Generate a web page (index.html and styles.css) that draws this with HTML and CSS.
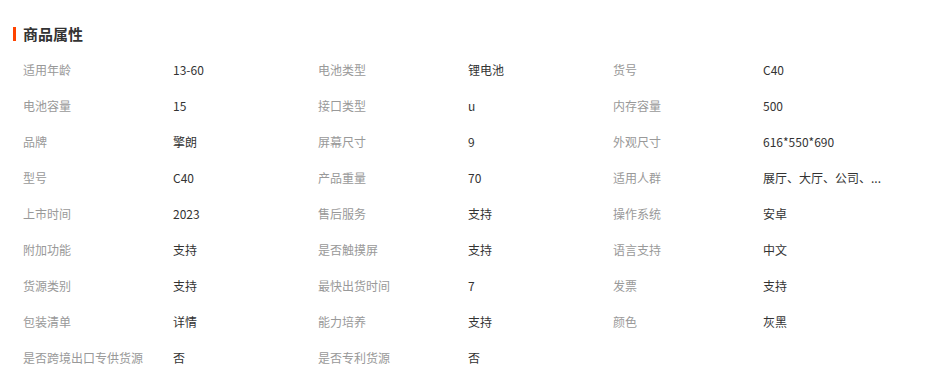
FILE: index.html
```html
<!DOCTYPE html>
<html lang="zh-CN">
<head>
<meta charset="utf-8">
<title>商品属性</title>
<link rel="stylesheet" href="styles.css">
</head>
<body>
<section class="attrs">
  <h2 class="attrs-title">商品属性</h2>
  <ul class="attrs-list">
    <li class="attr"><span class="attr-key">适用年龄</span><span class="attr-val">13-60</span></li>
    <li class="attr"><span class="attr-key">电池类型</span><span class="attr-val">锂电池</span></li>
    <li class="attr"><span class="attr-key">货号</span><span class="attr-val">C40</span></li>
    <li class="attr"><span class="attr-key">电池容量</span><span class="attr-val">15</span></li>
    <li class="attr"><span class="attr-key">接口类型</span><span class="attr-val">u</span></li>
    <li class="attr"><span class="attr-key">内存容量</span><span class="attr-val">500</span></li>
    <li class="attr"><span class="attr-key">品牌</span><span class="attr-val">擎朗</span></li>
    <li class="attr"><span class="attr-key">屏幕尺寸</span><span class="attr-val">9</span></li>
    <li class="attr"><span class="attr-key">外观尺寸</span><span class="attr-val">616*550*690</span></li>
    <li class="attr"><span class="attr-key">型号</span><span class="attr-val">C40</span></li>
    <li class="attr"><span class="attr-key">产品重量</span><span class="attr-val">70</span></li>
    <li class="attr"><span class="attr-key">适用人群</span><span class="attr-val">展厅、大厅、公司、...</span></li>
    <li class="attr"><span class="attr-key">上市时间</span><span class="attr-val">2023</span></li>
    <li class="attr"><span class="attr-key">售后服务</span><span class="attr-val">支持</span></li>
    <li class="attr"><span class="attr-key">操作系统</span><span class="attr-val">安卓</span></li>
    <li class="attr"><span class="attr-key">附加功能</span><span class="attr-val">支持</span></li>
    <li class="attr"><span class="attr-key">是否触摸屏</span><span class="attr-val">支持</span></li>
    <li class="attr"><span class="attr-key">语言支持</span><span class="attr-val">中文</span></li>
    <li class="attr"><span class="attr-key">货源类别</span><span class="attr-val">支持</span></li>
    <li class="attr"><span class="attr-key">最快出货时间</span><span class="attr-val">7</span></li>
    <li class="attr"><span class="attr-key">发票</span><span class="attr-val">支持</span></li>
    <li class="attr"><span class="attr-key">包装清单</span><span class="attr-val">详情</span></li>
    <li class="attr"><span class="attr-key">能力培养</span><span class="attr-val">支持</span></li>
    <li class="attr"><span class="attr-key">颜色</span><span class="attr-val">灰黑</span></li>
    <li class="attr"><span class="attr-key">是否跨境出口专供货源</span><span class="attr-val">否</span></li>
    <li class="attr"><span class="attr-key">是否专利货源</span><span class="attr-val">否</span></li>
  </ul>
</section>
</body>
</html>
```

FILE: styles.css
```css
html, body {
  margin: 0;
  padding: 0;
  background: #fff;
}

body {
  font-family: "Noto Sans CJK SC", "Microsoft YaHei", sans-serif;
  color: #333;
}

.attrs {
  padding: 23px 0 0 13px;
}

.attrs-title {
  margin: 0;
  display: flex;
  align-items: center;
  gap: 7px;
  font-size: 15px;
  font-weight: bold;
  line-height: 22px;
  color: #333;
}

.attrs-title::before {
  content: "";
  display: block;
  width: 3px;
  height: 14px;
  background: #ff4400;
}

.attrs-list {
  list-style: none;
  margin: 6px 0 0 10px;
  padding: 0;
  display: grid;
  grid-template-columns: repeat(3, 295px);
  grid-auto-rows: 36px;
  font-size: 12px;
}

.attr {
  display: flex;
  align-items: center;
  white-space: nowrap;
}

.attr-key {
  width: 150px;
  flex: none;
  color: #999;
}

.attr-val {
  color: #333;
}
```
